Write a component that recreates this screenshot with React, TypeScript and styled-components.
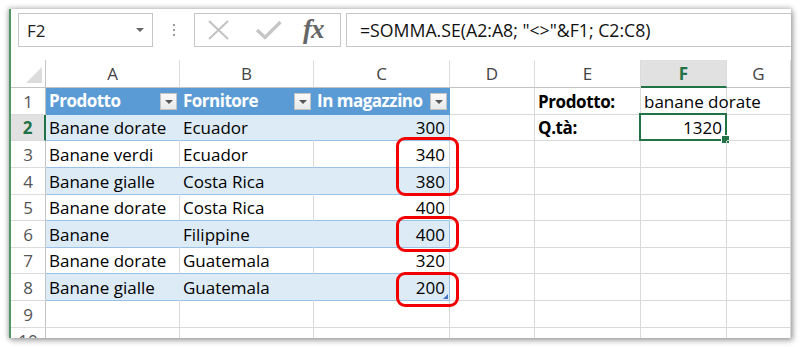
import React from "react";
import styled, { createGlobalStyle, css } from "styled-components";

const GlobalStyle = createGlobalStyle`
  html, body { margin: 0; padding: 0; background: #ffffff; }
  body { font-family: "Open Sans", "Liberation Sans", sans-serif; }
  * { box-sizing: border-box; }
`;

const GREEN = "#217346";
const GRID = "#d9d9d9";
const HEAD_LINE = "#c3c3c3";
const TABLE_BLUE = "#5b9bd5";
const BAND = "#ddebf7";
const BAND_LINE = "#9bc2e6";

const Page = styled.div`
  width: 800px;
  height: 347px;
  padding: 9px;
`;

const Window = styled.div`
  width: 782px;
  height: 329px;
  background: #fff;
  border-left: 2px solid #4f9566;
  box-shadow: 0 0 5px 1px rgba(0, 0, 0, 0.28), 2px 3px 6px rgba(0, 0, 0, 0.22);
  overflow: hidden;
  display: flex;
  flex-direction: column;
`;

const FormulaBar = styled.div`
  height: 51px;
  flex: none;
  display: flex;
  align-items: flex-start;
  padding: 4px 0 0 7px;
`;

const NameBox = styled.div`
  width: 135px;
  height: 34px;
  border: 1px solid #c6c6c6;
  display: flex;
  align-items: center;
  justify-content: space-between;
  padding: 0 8px 0 8px;
  font-size: 17px;
  color: #222;
`;

const Caret = styled.span<{ $size?: number; $color?: string }>`
  width: 0;
  height: 0;
  border-left: ${(p) => p.$size ?? 4}px solid transparent;
  border-right: ${(p) => p.$size ?? 4}px solid transparent;
  border-top: ${(p) => p.$size ?? 4}px solid ${(p) => p.$color ?? "#666"};
`;

const Grip = styled.div`
  width: 41px;
  height: 34px;
  display: flex;
  flex-direction: column;
  align-items: center;
  justify-content: center;
  gap: 3px;
  & > span {
    width: 2px;
    height: 2px;
    background: #9a9a9a;
  }
`;

const FxBox = styled.div`
  width: 147px;
  height: 34px;
  border: 1px solid #c6c6c6;
  display: flex;
  align-items: center;
  padding-left: 12px;
`;

const FxLabel = styled.span`
  font-family: "Liberation Serif", "DejaVu Serif", serif;
  font-style: italic;
  font-weight: bold;
  font-size: 27px;
  color: #666;
  letter-spacing: -1px;
  margin-left: 20px;
  line-height: 1;
  padding-bottom: 2px;
`;

const FormulaInput = styled.div`
  flex: 1;
  height: 34px;
  margin-left: 5px;
  border: 1px solid #c6c6c6;
  border-right: none;
  display: flex;
  align-items: center;
  padding-left: 13px;
  font-size: 17.7px;
  color: #111;
  white-space: pre;
`;

const Sheet = styled.div`
  flex: 1;
  position: relative;
  display: grid;
  grid-template-columns: 35px 134px 134px 136px 85px 106px 86px 1fr;
  grid-template-rows: 28px repeat(10, 26.625px);
  font-size: 17px;
`;

const Corner = styled.div`
  border-right: 1px solid ${HEAD_LINE};
  border-bottom: 1px solid ${HEAD_LINE};
  display: flex;
  align-items: flex-end;
  justify-content: flex-end;
  padding: 0 3px 4px 0;
  &::after {
    content: "";
    width: 0;
    height: 0;
    border-left: 16px solid transparent;
    border-bottom: 16px solid #dcdcdc;
  }
`;

const ColHead = styled.div<{ $active?: boolean }>`
  border-right: 1px solid #dcdcdc;
  border-bottom: 1px solid ${HEAD_LINE};
  display: flex;
  align-items: center;
  justify-content: center;
  color: #444;
  ${(p) =>
    p.$active &&
    css`
      background: #e1e1e1;
      border-bottom: 2px solid ${GREEN};
      color: ${GREEN};
      font-weight: bold;
    `}
`;

const RowHead = styled.div<{ $active?: boolean }>`
  border-right: 1px solid ${HEAD_LINE};
  border-bottom: 1px solid #dcdcdc;
  display: flex;
  align-items: flex-end;
  justify-content: center;
  padding-bottom: 1px;
  line-height: 22px;
  color: #555;
  ${(p) =>
    p.$active &&
    css`
      background: #e1e1e1;
      border-right: 2px solid ${GREEN};
      color: ${GREEN};
      font-weight: bold;
    `}
`;

type Kind = "plain" | "band" | "white" | "head";

const Cell = styled.div<{ $kind: Kind; $right?: boolean; $bold?: boolean; $edge?: boolean }>`
  position: relative;
  display: flex;
  align-items: flex-end;
  justify-content: ${(p) => (p.$right ? "flex-end" : "flex-start")};
  padding: 0 4px 1px 3px;
  line-height: 22px;
  white-space: nowrap;
  color: #000;
  font-weight: ${(p) => (p.$bold ? "bold" : "normal")};
  letter-spacing: ${(p) => (p.$bold ? "-0.4px" : "normal")};
  border-right: 1px solid ${GRID};
  border-bottom: 1px solid ${GRID};
  ${(p) =>
    p.$kind === "band" &&
    css`
      background: ${BAND};
      border-right-color: ${p.$edge ? BAND_LINE : BAND};
      border-bottom-color: ${BAND_LINE};
    `}
  ${(p) =>
    p.$kind === "white" &&
    css`
      border-right-color: ${p.$edge ? "#c5d9ec" : GRID};
      border-bottom-color: ${BAND_LINE};
    `}
  ${(p) =>
    p.$kind === "head" &&
    css`
      background: ${TABLE_BLUE};
      color: #fff;
      font-weight: bold;
      letter-spacing: -0.5px;
      justify-content: space-between;
      align-items: center;
      padding: 1px 2px 0 3px;
      border-right-color: ${TABLE_BLUE};
      border-bottom-color: ${TABLE_BLUE};
    `}
`;

const FilterButton = styled.span`
  width: 17px;
  height: 17px;
  flex: none;
  background: linear-gradient(#fafafa, #e9e9e9);
  border: 1px solid #c4c4c4;
  display: flex;
  align-items: center;
  justify-content: center;
  margin-top: 1px;
`;

const Selection = styled.div`
  position: absolute;
  left: -2px;
  top: -2px;
  right: -1px;
  bottom: -1px;
  border: 2px solid ${GREEN};
  pointer-events: none;
  &::after {
    content: "";
    position: absolute;
    right: -5px;
    bottom: -5px;
    width: 7px;
    height: 7px;
    background: ${GREEN};
    border: 1px solid #fff;
  }
`;

const ResizeHandle = styled.span`
  position: absolute;
  right: 1px;
  bottom: 1px;
  width: 0;
  height: 0;
  border-left: 5px solid transparent;
  border-bottom: 5px solid #4472c4;
`;

const Highlight = styled.div`
  position: absolute;
  border: 3px solid #f20000;
  border-radius: 9px;
  pointer-events: none;
`;

const XIcon = () => (
  <svg width="24" height="20" viewBox="0 0 24 20">
    <path d="M2 1 L21 19 M21 1 L2 19" stroke="#c2c2c2" strokeWidth="2" fill="none" />
  </svg>
);

const CheckIcon = () => (
  <svg width="28" height="20" viewBox="0 0 28 20" style={{ marginLeft: 24 }}>
    <path d="M2 10 L10 17.5 L25.5 2" stroke="#c6c6c6" strokeWidth="3.4" fill="none" />
  </svg>
);

const columns = ["A", "B", "C", "D", "E", "F", "G"];

const tableRows: [string, string, number][] = [
  ["Banane dorate", "Ecuador", 300],
  ["Banane verdi", "Ecuador", 340],
  ["Banane gialle", "Costa Rica", 380],
  ["Banane dorate", "Costa Rica", 400],
  ["Banane", "Filippine", 400],
  ["Banane dorate", "Guatemala", 320],
  ["Banane gialle", "Guatemala", 200],
];

const highlights = [
  { top: 77, height: 59 },
  { top: 156, height: 36 },
  { top: 212, height: 35 },
];

export default function App() {
  return (
    <>
      <GlobalStyle />
      <Page>
        <Window>
          <FormulaBar>
            <NameBox>
              <span>F2</span>
              <Caret $size={4} $color="#666" />
            </NameBox>
            <Grip>
              <span />
              <span />
              <span />
            </Grip>
            <FxBox>
              <XIcon />
              <CheckIcon />
              <FxLabel>fx</FxLabel>
            </FxBox>
            <FormulaInput>{'=SOMMA.SE(A2:A8; "<>"&F1; C2:C8)'}</FormulaInput>
          </FormulaBar>
          <Sheet>
            <Corner />
            {columns.map((c) => (
              <ColHead key={c} $active={c === "F"}>
                {c}
              </ColHead>
            ))}

            {/* Row 1 */}
            <RowHead>1</RowHead>
            {["Prodotto", "Fornitore", "In magazzino"].map((h) => (
              <Cell key={h} $kind="head">
                <span>{h}</span>
                <FilterButton>
                  <Caret $size={4} $color="#555" />
                </FilterButton>
              </Cell>
            ))}
            <Cell $kind="plain" />
            <Cell $kind="plain" $bold>
              Prodotto:
            </Cell>
            <Cell $kind="plain">banane dorate</Cell>
            <Cell $kind="plain" />

            {tableRows.map(([prod, forn, qty], i) => {
              const rowNo = i + 2;
              const kind: Kind = i % 2 === 0 ? "band" : "white";
              return (
                <React.Fragment key={rowNo}>
                  <RowHead $active={rowNo === 2}>{rowNo}</RowHead>
                  <Cell $kind={kind}>{prod}</Cell>
                  <Cell $kind={kind}>{forn}</Cell>
                  <Cell $kind={kind} $right $edge>
                    {qty}
                    {rowNo === 8 && <ResizeHandle />}
                  </Cell>
                  <Cell $kind="plain" />
                  <Cell $kind="plain" $bold>
                    {rowNo === 2 ? "Q.tà:" : ""}
                  </Cell>
                  <Cell $kind="plain" $right>
                    {rowNo === 2 ? "1320" : ""}
                    {rowNo === 2 && <Selection />}
                  </Cell>
                  <Cell $kind="plain" />
                </React.Fragment>
              );
            })}

            {[9, 10].map((rowNo) => (
              <React.Fragment key={rowNo}>
                <RowHead>{rowNo}</RowHead>
                {columns.map((c) => (
                  <Cell key={c} $kind="plain" />
                ))}
              </React.Fragment>
            ))}

            {highlights.map((h, i) => (
              <Highlight
                key={i}
                style={{ left: 385, width: 63, top: h.top, height: h.height }}
              />
            ))}
          </Sheet>
        </Window>
      </Page>
    </>
  );
}
